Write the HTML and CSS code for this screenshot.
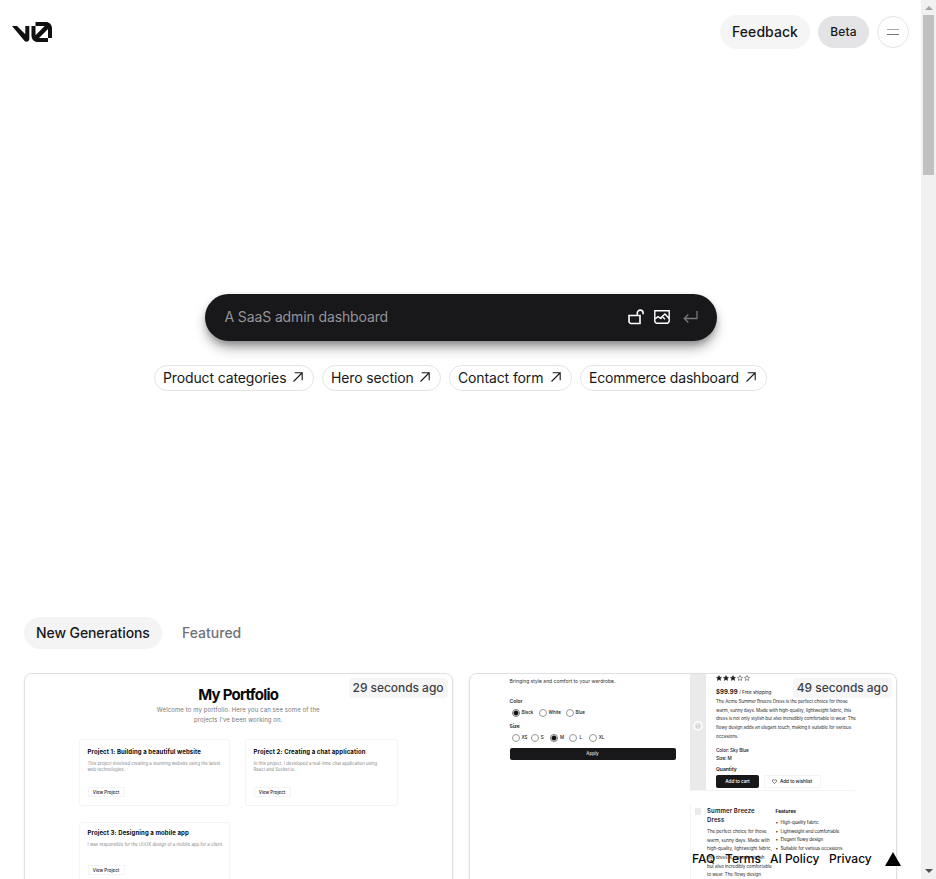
FILE: index.html
```html
<!DOCTYPE html>
<html lang="en">
<head>
<meta charset="utf-8">
<title>v0</title>
<link rel="stylesheet" href="styles.css">
</head>
<body>
<svg class="defs" width="0" height="0">
  <symbol id="arrow" viewBox="0 0 10 10"><path d="M.5 9.500 9 1M1.700.8h7.500v7.500" fill="none" stroke="currentColor" stroke-width="1.100"/></symbol>
  <symbol id="star" viewBox="0 0 24 24"><path d="m12 2 3.1 6.6 7.2.9-5.3 5 1.400 7.200L12 18.200l-6.400 3.500L7 14.500l-5.300-5 7.200-.9z" stroke="#18181b" stroke-width="1.800"/></symbol>
</svg>
<div class="page">
  <header class="top">
    <svg class="logo" viewBox="0 0 40 20"><path d="M0 4h5l8.300 8.300V4h4v13c0 1.600-1.300 2.700-2.700 2.700-.8 0-1.500-.3-2-.8zM23.500 0h10.200C37.300 0 40 2.700 40 6.300V16h-4V7L27 16h9v4H26c-3.900 0-6.500-2.600-6.500-6.500V4h4v9.200L32.700 4h-9.200z" fill="#111"/></svg>
    <nav class="actions">
      <a class="btn feedback">Feedback</a>
      <a class="btn beta">Beta</a>
      <a class="menu"><i class="upper"></i><i></i></a>
    </nav>
  </header>
  <section class="hero">
    <div class="prompt">
      <span class="placeholder">A SaaS admin dashboard</span>
      <svg class="lock" viewBox="0 0 16 16"><path d="M1 6.500h11v8H2.500L1 13zM9.300 6.500V4a2.900 2.900 0 0 1 5.800 0v1.300" fill="none" stroke="#fff" stroke-width="1.600"/></svg>
      <svg class="image" viewBox="0 0 16 14"><path d="M.8.800h14.400v10.700L13.700 13.200H2.300L.8 11.700zM1 9l3-2.400 3.400 2.200M7 8.800l.2-1.400L11 4l4 4.500M8.500 6.800l2.500 2.500" fill="none" stroke="#fff" stroke-width="1.400"/></svg>
      <svg class="enter" viewBox="0 0 15 14"><path d="M14 1v7.500H1.200M5.300 4.500l-4 4 4 4" fill="none" stroke="#77777b" stroke-width="1.300"/></svg>
    </div>
    <div class="chips">
      <a class="chip c1"><span>Product categories</span><svg><use href="#arrow"/></svg></a>
      <a class="chip c2"><span>Hero section</span><svg><use href="#arrow"/></svg></a>
      <a class="chip c3"><span>Contact form</span><svg><use href="#arrow"/></svg></a>
      <a class="chip c4"><span>Ecommerce dashboard</span><svg><use href="#arrow"/></svg></a>
    </div>
  </section>
  <div class="tabs"><a class="tab active">New Generations</a><a class="tab">Featured</a></div>
  <main class="cards">
    <article class="card portfolio">
      <span class="time">29 seconds ago</span>
      <h1>My Portfolio</h1>
      <p class="intro">Welcome to my portfolio. Here you can see some of the<br>projects I've been working on.</p>
      <div class="projects">
        <section class="project"><h2>Project 1: Building a beautiful website</h2><p>This project involved creating a stunning website using the latest<br>web technologies.</p><a>View Project</a></section>
        <section class="project"><h2>Project 2: Creating a chat application</h2><p>In this project, I developed a real-time chat application using<br>React and Socket.io.</p><a>View Project</a></section>
        <section class="project"><h2>Project 3: Designing a mobile app</h2><p>I was responsible for the UI/UX design of a mobile app for a client.</p><a>View Project</a></section>
      </div>
    </article>
    <article class="card store">
      <span class="time">49 seconds ago</span>
      <div class="options">
        <p class="lead">Bringing style and comfort to your wardrobe.</p>
        <h3>Color</h3>
        <div class="radios colors"><label class="on">Black</label><label>White</label><label>Blue</label></div>
        <h3>Size</h3>
        <div class="radios sizes"><label>XS</label><label>S</label><label class="on">M</label><label>L</label><label>XL</label></div>
        <div class="apply">Apply</div>
      </div>
      <div class="product">
        <div class="detail">
          <div class="photo"><svg viewBox="0 0 10 10"><circle cx="5" cy="5" r="5" fill="#fafafa"/><path d="M3 3h4v4H3zM3 6l1-1 1 1 1-2 1 1" fill="none" stroke="#bbb" stroke-width=".7"/></svg></div>
          <div class="info">
            <div class="stars"><svg><use href="#star"/></svg><svg><use href="#star"/></svg><svg><use href="#star"/></svg><svg class="empty"><use href="#star"/></svg><svg class="empty"><use href="#star"/></svg></div>
            <div class="price"><b>$99.99</b> / Free shipping</div>
            <p class="desc">The Acme Summer Breeze Dress is the perfect choice for those<br>warm, sunny days. Made with high-quality, lightweight fabric, this<br>dress is not only stylish but also incredibly comfortable to wear. The<br>flowy design adds an elegant touch, making it suitable for various<br>occasions.</p>
            <p class="meta">Color: Sky Blue<br>Size: M</p>
            <h3>Quantity</h3>
            <div class="buy"><a class="cart">Add to cart</a><a class="wish"><svg viewBox="0 0 12 11"><path d="M6 10C2 7 1 5.500 1 3.800 1 .8 4.700.2 6 2.700 7.300.2 11 .8 11 3.800 11 5.500 10 7 6 10z" fill="none" stroke="#222" stroke-width="1.500"/></svg>Add to wishlist</a></div>
          </div>
        </div>
        <div class="summary">
          <i class="thumb"></i>
          <div class="about"><h2>Summer Breeze<br>Dress</h2><p>The perfect choice for those<br>warm, sunny days. Made with<br>high-quality, lightweight fabric,<br>this dress is not only stylish<br>but also incredibly comfortable<br>to wear. The flowy design</p></div>
          <div class="features"><h3>Features</h3><ul><li>High-quality fabric</li><li>Lightweight and comfortable</li><li>Elegant flowy design</li><li>Suitable for various occasions</li></ul></div>
        </div>
      </div>
    </article>
  </main>
  <footer class="links"><a class="l1">FAQ</a><a class="l2">Terms</a><a class="l3">AI Policy</a><a class="l4">Privacy</a><svg viewBox="0 0 16 14"><path d="M8 0l8 14H0z"/></svg></footer>
</div>
<aside class="scrollbar"><i class="up"></i><i class="thumb"></i><i class="down"></i></aside>
</body>
</html>
```
FILE: styles.css
```css
* { box-sizing: border-box; }
body { margin: 0; width: 936px; height: 879px; overflow: hidden; display: grid; grid-template-columns: 921px 15px; background: #fff; color: #18181b; font: 14px/20px Inter, "Liberation Sans", sans-serif; }
h1, h2, h3, p, ul { margin: 0; padding: 0; }
svg { display: block; flex: none; }
.defs { position: absolute; }
.page { position: relative; height: 879px; overflow: hidden; display: flex; flex-direction: column; }
.page > * { flex-shrink: 0; }

.top { height: 64px; padding: 15px 12px 0; display: flex; justify-content: space-between; }
.logo { width: 40px; height: 20px; margin-top: 7px; }
.actions { display: flex; gap: 8px; }
.btn { border-radius: 17px; display: flex; align-items: center; justify-content: center; font-weight: 500; white-space: nowrap; }
.feedback { width: 90px; height: 34px; background: #f5f5f5; letter-spacing: .05px; }
.beta { width: 51px; height: 32px; margin-top: 1px; background: #e4e4e7; font-size: 12px; letter-spacing: .2px; }
.menu { width: 32px; height: 32px; margin: 1px 0 0; border: 1px solid #e4e4e7; border-radius: 50%; display: flex; flex-direction: column; align-items: center; justify-content: center; gap: 4px; }
.menu i { width: 12px; height: 1px; background: #777; }
.menu .upper { background: #aaa; }

.hero { height: 553px; padding-top: 230px; display: flex; flex-direction: column; align-items: center; }
.prompt { width: 512px; height: 47px; padding: 0 19px 1px 20px; border-radius: 24px; background: #18181b; display: flex; align-items: center; box-shadow: 0 8px 14px -3px rgba(0,0,0,.45), 0 3px 6px rgba(0,0,0,.15); }
.placeholder { flex: 1; color: #94949a; white-space: nowrap; letter-spacing: -.12px; }
.lock { width: 16px; height: 16px; margin-right: 10px; }
.image { width: 16px; height: 14px; margin-right: 13px; }
.enter { width: 15px; height: 14px; }
.chips { margin-top: 24px; display: flex; gap: 8px; }
.chip { height: 26px; padding: 0 10px 0 8px; border: 1px solid #e4e4e7; border-radius: 13px; display: flex; align-items: center; justify-content: space-between; white-space: nowrap; letter-spacing: -.13px; }
.chip svg { width: 10px; height: 10px; margin-top: -2px; color: #18181b; }
.c1 { width: 160px; } .c2 { width: 119px; } .c3 { width: 123px; } .c4 { width: 187px; }
.c4 { letter-spacing: -.18px; }

.tabs { height: 56px; padding-left: 24px; display: flex; gap: 8px; }
.tab { height: 32px; padding: 0 12px; border-radius: 16px; display: flex; align-items: center; font-weight: 500; color: #71717a; white-space: nowrap; }
.tab.active { width: 138px; background: #f4f4f4; color: #18181b; letter-spacing: -.1px; }

.cards { padding: 0 24px; display: grid; grid-template-columns: 1fr 1fr; gap: 16px; }
.card { position: relative; height: 230px; border: 1px solid #e0e0e2; border-radius: 8px; box-shadow: 0 1px 3px rgba(0,0,0,.08); overflow: hidden; white-space: nowrap; }
.time { position: absolute; top: 4px; right: 4px; width: 99px; height: 20px; border-radius: 4px; background: #f6f6f6; color: #3f3f46; font-weight: 500; font-size: 12px; line-height: 20px; text-align: center; letter-spacing: -.05px; }

.portfolio { padding-top: 11px; text-align: center; }
.portfolio h1 { font-size: 15px; line-height: 20px; font-weight: 700; letter-spacing: -.75px; color: #09090b; }
.intro { font-size: 6px; line-height: 10px; letter-spacing: .1px; color: #777; }
.projects { margin: 14px 0 0 54px; display: grid; grid-template-columns: 151px 153px; gap: 16px 15px; text-align: left; }
.project { height: 67px; padding: 8px 7.500px; border: 1px solid #f5f5f5; border-radius: 2px; display: flex; flex-direction: column; align-items: flex-start; }
.project h2 { font-size: 6px; line-height: 8px; font-weight: 700; letter-spacing: .11px; color: #09090b; }
.project p { margin-top: 5px; height: 23px; font-size: 4.300px; line-height: 6px; letter-spacing: .02px; color: #888; }
.project a { margin-top: 6px; width: 37px; height: 10px; border: 1px solid #f4f4f4; font-size: 4.400px; line-height: 9px; text-align: center; font-weight: 500; }
.project:nth-child(3) { padding-top: 6px; }
.project:nth-child(3) a { margin-top: 0; }

.store { display: flex; font-size: 5px; }
.options { width: 166px; margin-left: 40px; padding-top: 3px; }
.lead { font-size: 5px; line-height: 8px; color: #333; }
.options h3, .info h3 { font-size: 5px; line-height: 8px; font-weight: 600; }
.options .lead + h3 { margin-top: 12px; }
.radios { display: flex; height: 13px; margin: 1px 0 3px; align-items: center; padding-left: 2px; font-size: 4.500px; font-weight: 500; line-height: 8px; }
.radios label { display: flex; align-items: center; }
.radios label::before { content: ""; flex: none; width: 6px; height: 6px; margin-right: 2px; border: 1px solid #999; border-radius: 50%; }
.radios .on::before { background: radial-gradient(#111 45%, #fff 70%); border-color: #777; }
.colors label { width: 27px; }
.sizes label { width: 19.300px; }
.apply { height: 12px; margin-top: 4px; border-radius: 2px; background: #18181b; color: #fff; text-align: center; font-size: 4.500px; line-height: 12px; }
.product { margin-left: 14px; width: 165px; }
.detail { display: flex; height: 117px; border-bottom: 1px solid #f4f4f4; }
.photo { flex: none; width: 16px; background: #eaeaea; display: flex; align-items: center; justify-content: center; }
.photo svg { width: 10px; height: 10px; margin-top: -12px; }
.info { margin-left: 10.500px; }
.stars { display: flex; gap: 1px; padding-top: 1px; height: 9px; }
.stars svg { width: 6px; height: 6px; fill: #18181b; }
.stars .empty { fill: none; }
.price { height: 13px; margin-top: 2px; line-height: 13px; font-size: 4.700px; letter-spacing: -.05px; }
.price b { font-size: 6px; letter-spacing: .1px; }
.desc { font-size: 4.600px; line-height: 8.700px; letter-spacing: -.11px; color: #333; }
.meta { margin-top: 4px; font-size: 4.700px; line-height: 8.700px; font-weight: 500; letter-spacing: -.1px; }
.info h3 { margin-top: 2.500px; }
.buy { margin-top: 2px; display: flex; font-size: 4.700px; line-height: 13px; font-weight: 500; letter-spacing: -.05px; }
.cart { width: 43px; height: 13px; background: #18181b; color: #fff; border-radius: 2px; text-align: center; }
.wish { margin-left: 5px; width: 57px; height: 13px; border: 1px solid #f4f4f4; line-height: 11px; display: flex; gap: 3px; align-items: center; padding-left: 7px; }
.wish svg { width: 5px; height: 5px; }
.summary { margin-top: 14px; display: flex; height: 110px; border-left: 1px solid #f4f4f4; padding-top: 2px; }
.summary .thumb { flex: none; width: 6px; height: 7px; margin: 1px 6.500px 0 4px; background: #eaeaea; }
.about { flex: none; width: 68.500px; }
.about h2 { font-size: 6px; line-height: 8.700px; font-weight: 600; letter-spacing: .15px; }
.about p { margin-top: 3.500px; font-size: 4.600px; line-height: 8.700px; letter-spacing: -.08px; color: #333; }
.features h3 { font-size: 4.800px; line-height: 8px; font-weight: 700; }
.features ul { margin-top: 4px; padding-left: 5px; font-size: 4.500px; line-height: 8.700px; letter-spacing: -.08px; list-style: none; }
.features li::before { content: "•"; display: inline-block; width: 5px; margin-left: -5px; }

.links { position: absolute; left: 692px; top: 850px; display: flex; height: 18px; align-items: center; color: #09090b; font-size: 12px; font-weight: 500; white-space: nowrap; }
.l1 { width: 33px; } .l2 { width: 45px; } .l3 { width: 59px; } .l4 { width: 56px; }
.links svg { width: 16px; height: 14px; }

.scrollbar { background: #f1f1f1; display: flex; flex-direction: column; align-items: center; }
.scrollbar .up { border: 4px solid transparent; border-top: 0; border-bottom: 4px solid #a3a3a3; margin: 6px 0 5px; }
.scrollbar .thumb { width: 11px; height: 160px; background: #c1c1c1; }
.scrollbar .down { border: 4px solid transparent; border-bottom: 0; border-top: 4px solid #505050; margin: auto 0 6px; }
```
